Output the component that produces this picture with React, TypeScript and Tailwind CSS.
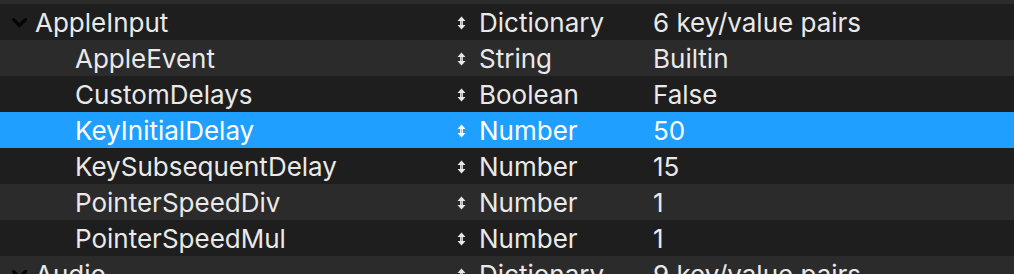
import React from 'react';

interface Row {
  key: string;
  type: string;
  value: string;
  level: 0 | 1;
  selected?: boolean;
}

const ROWS: Row[] = [
  { key: 'AppleInput',          type: 'Dictionary', value: '6 key/value pairs', level: 0 },
  { key: 'AppleEvent',          type: 'String',     value: 'Builtin',           level: 1 },
  { key: 'CustomDelays',        type: 'Boolean',    value: 'False',             level: 1 },
  { key: 'KeyInitialDelay',     type: 'Number',     value: '50',                level: 1, selected: true },
  { key: 'KeySubsequentDelay',  type: 'Number',     value: '15',                level: 1 },
  { key: 'PointerSpeedDiv',     type: 'Number',     value: '1',                 level: 1 },
  { key: 'PointerSpeedMul',     type: 'Number',     value: '1',                 level: 1 },
  { key: 'Audio',               type: 'Dictionary', value: '9 key/value pairs', level: 0 },
];

function Chevron() {
  return (
    <svg width="15" height="10" viewBox="0 0 15 10" className="shrink-0">
      <polyline points="1.5,1.5 7.5,7.5 13.5,1.5" fill="none" stroke="#050505" strokeWidth="3.2" strokeLinecap="round" strokeLinejoin="round" />
    </svg>
  );
}

// up/down stepper arrow next to the type
function UpDown() {
  return (
    <svg width="9" height="14" viewBox="0 0 9 14" className="shrink-0">
      <path d="M4.5 0.5 L8.5 5 L5.9 5 L5.9 9 L8.5 9 L4.5 13.5 L0.5 9 L3.1 9 L3.1 5 L0.5 5 Z" fill="currentColor" />
      <rect x="4.1" y="5" width="0.8" height="4" fill="#000" opacity="0.35" />
    </svg>
  );
}

export default function App() {
  return (
    <div className="w-[1014px] h-[274px] overflow-hidden bg-[#1e1e1e] text-[26px] leading-none"
      style={{ fontFamily: 'Inter, "Liberation Sans", sans-serif' }}>
      <div className="h-[4px] bg-[#2b2b2b]" />
      {ROWS.map((r, i) => (
        <div key={r.key}
          className={`flex items-center h-[36px] pt-[1px] ${r.selected ? 'bg-[#1f9fff] text-white' : i % 2 === 0 ? 'bg-[#1e1e1e] text-[#e9e9e9]' : 'bg-[#2b2b2b] text-[#e9e9e9]'}`}>
          <div className="w-[457px] flex items-center shrink-0">
            {r.level === 0 ? (
              <>
                <div className="w-[35px] pl-[12px] flex items-center"><Chevron /></div>
                <span>{r.key}</span>
              </>
            ) : (
              <span className="pl-[75px]">{r.key}</span>
            )}
          </div>
          <div className="w-[196px] flex items-center gap-[13px] shrink-0">
            <UpDown />
            <span>{r.type}</span>
          </div>
          <div className="flex-1">{r.value}</div>
        </div>
      ))}
    </div>
  );
}
